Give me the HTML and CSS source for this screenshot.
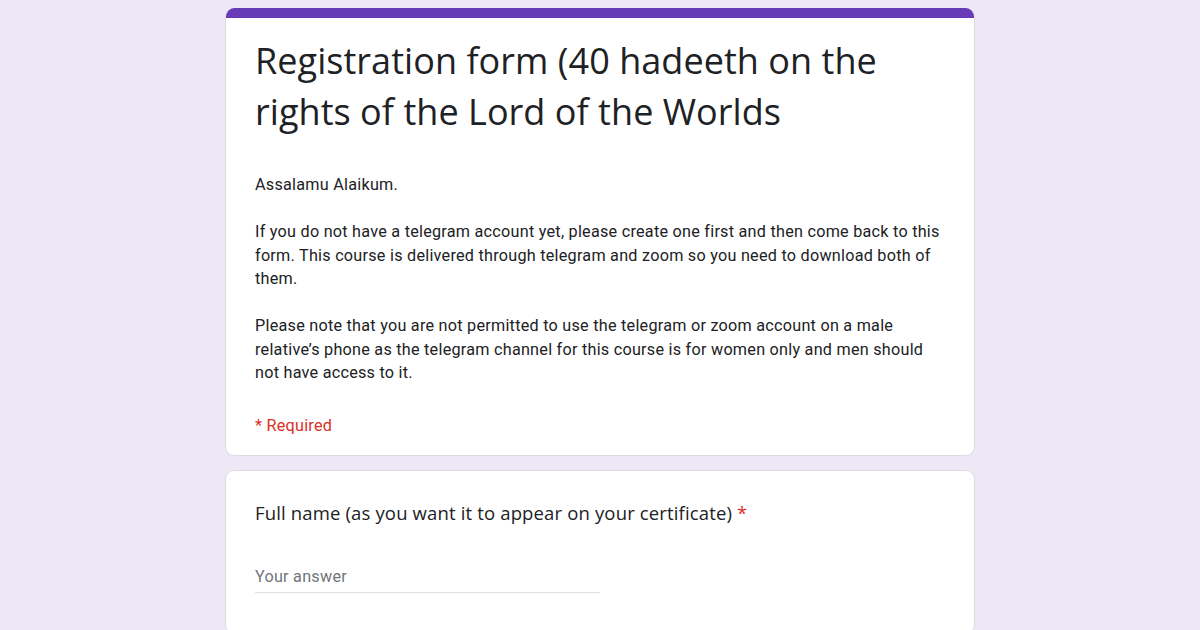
FILE: index.html
```html
<!DOCTYPE html>
<html lang="en">
<head>
<meta charset="utf-8">
<title>Registration form</title>
<link rel="stylesheet" href="styles.css">
</head>
<body>
<main class="form">
  <section class="card header-card">
    <div class="accent"></div>
    <div class="card-body header-body">
      <h1 class="title">Registration form (40 hadeeth on the rights of the Lord of the Worlds</h1>
      <div class="desc">
        <p>Assalamu Alaikum.</p>
        <p>If you do not have a telegram account yet, please create one first and then come back to this form. This course is delivered through telegram and zoom so you need to download both of them.</p>
        <p>Please note that you are not permitted to use the telegram or zoom account on a male relative’s phone as the telegram channel for this course is for women only and men should not have access to it.</p>
      </div>
      <div class="required-note">* Required</div>
    </div>
  </section>
  <section class="card question-card">
    <div class="card-body question-body">
      <div class="question">Full name (as you want it to appear on your certificate) <span class="star">*</span></div>
      <div class="answer"><span class="placeholder">Your answer</span></div>
    </div>
  </section>
</main>
</body>
</html>
```
FILE: styles.css
```css
html, body {
  margin: 0;
  padding: 0;
  background: #ede7f6;
  height: 100%;
  overflow: hidden;
}
.form {
  width: 750px;
  margin: 8px auto 0;
  display: flex;
  flex-direction: column;
  gap: 14px;
}
.card {
  background: #fff;
  border: 1px solid #dadce0;
  border-radius: 9px;
  overflow: hidden;
}
.header-card {
  border-top: none;
}
.accent {
  height: 10px;
  background: #673ab7;
  margin: 0 -1px;
}
.card-body {
  padding: 0 29px 0 29px;
}
.header-body {
  padding-top: 17px;
  padding-bottom: 18px;
}
.title {
  margin: 0;
  font-family: "Open Sans", "Liberation Sans", sans-serif;
  font-weight: 400;
  font-size: 36px;
  line-height: 51px;
  color: #202124;
  letter-spacing: 0.05px;
}
.desc {
  margin-top: 36px;
  font-family: Roboto, "Liberation Sans", sans-serif;
  font-size: 16.2px;
  line-height: 23.5px;
  letter-spacing: 0.25px;
  color: #202124;
}
.desc p {
  margin: 0 0 23.5px;
}
.desc p:last-child {
  margin-bottom: 0;
}
.required-note {
  margin-top: 29px;
  font-family: Roboto, "Liberation Sans", sans-serif;
  font-size: 16.2px;
  line-height: 23.5px;
  letter-spacing: 0.25px;
  color: #d93025;
}
.question-body {
  padding-top: 28px;
  padding-bottom: 40px;
}
.question {
  font-family: "Open Sans", "Liberation Sans", sans-serif;
  font-size: 18.5px;
  line-height: 28px;
  color: #202124;
  letter-spacing: 0.15px;
}
.star {
  color: #d93025;
}
.answer {
  margin-top: 38px;
  width: 345px;
  padding-bottom: 3px;
  border-bottom: 1px solid #e0e0e0;
}
.placeholder {
  display: block;
  font-family: Roboto, "Liberation Sans", sans-serif;
  font-size: 16.2px;
  line-height: 23.5px;
  letter-spacing: 0.25px;
  color: #70757a;
}
```
